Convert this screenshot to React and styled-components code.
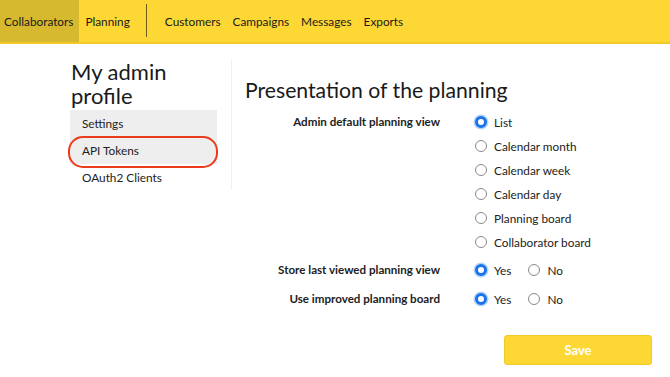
import React, { useState } from 'react'
import styled, { createGlobalStyle } from 'styled-components'

const GlobalStyle = createGlobalStyle`
    body {
        margin: 0;
        background: #fff;
        font-family: Lato, "Open Sans", sans-serif;
        color: #222;
    }
`

const Container = styled.div`
    width: 670px;
    height: 377px;
    overflow: hidden;
`
const Header = styled.div`
    height: 42px;
    display: flex;
    align-items: stretch;
    background: #fdd835;
    border-bottom: 2px solid #f3c928;
`
const NavItem = styled.div`
    display: flex;
    align-items: center;
    padding: 0 ${props => props.active ? '6px 0 4px' : '6px'};
    font-size: 11.8px;
    color: #1a1a1a;
    background: ${props => props.active ? '#d7b92f' : 'transparent'};
`
const NavSeparator = styled.div`
    width: 1px;
    margin: 4px 12px 5px 10px;
    background: #6b5c1c;
`
const Wrapper = styled.div`
    display: flex;
    padding: 16px 18px 0 70px;
`
const Sidebar = styled.div`
    width: 147px;
    position: relative;
`
const SideTitle = styled.div`
    font-size: 22px;
    line-height: 24px;
    padding: 0 0 2px 1px;
    color: #1a1a1a;
`
const SideItem = styled.div`
    height: 27px;
    display: flex;
    align-items: center;
    padding-left: 12px;
    font-size: 11.8px;
    background: ${props => props.grey ? '#eeeeee' : 'transparent'};
`
const Highlight = styled.div`
    position: absolute;
    left: -2px;
    top: 76px;
    width: 146px;
    height: 28px;
    border: 2px solid #ec3a1c;
    border-radius: 15px;
`
const Divider = styled.div`
    width: 1px;
    height: 130px;
    margin: 0 13px 0 14px;
    background: #f0f0f0;
    flex-shrink: 0;
`
const Main = styled.div`
    flex: 1;
`
const Title = styled.div`
    font-size: 21.2px;
    line-height: 26px;
    margin-top: 17px;
    color: #1a1a1a;
`
const Form = styled.div`
    margin-top: 7px;
`
const Row = styled.div`
    display: flex;
    align-items: flex-start;
    margin-bottom: ${props => props.gap || 5}px;
`
const Label = styled.div`
    width: 195px;
    text-align: right;
    font-weight: 700;
    font-size: 11.6px;
    line-height: 24px;
    padding-right: 35px;
    flex-shrink: 0;
`
const Options = styled.div`
    display: flex;
    flex-direction: ${props => props.inline ? 'row' : 'column'};
    gap: ${props => props.inline ? '17px' : '0'};
`
const Option = styled.label`
    display: flex;
    align-items: center;
    height: 24px;
    font-size: 11.8px;
    color: #222;
    cursor: pointer;
`
const Dot = styled.span`
    width: 12px;
    height: 12px;
    border-radius: 50%;
    box-sizing: border-box;
    margin-right: 7px;
    border: ${props => props.on ? '3.5px solid #1a73e8' : '1px solid #8a8a8a'};
    background: #fff;
    box-shadow: ${props => props.on ? '0 0 0 1.5px #b9d3f7' : 'none'};
`
const Actions = styled.div`
    display: flex;
    justify-content: flex-end;
    margin-top: 24px;
`
const Button = styled.button`
    width: 148px;
    height: 30px;
    border: 1px solid #f1cb2a;
    border-radius: 3px;
    background: #fdd835;
    color: #fff;
    font-family: Lato, sans-serif;
    font-size: 13px;
    font-weight: 700;
    cursor: pointer;
`

function Radio({ on, label, onClick }) {
    return (
        <Option onClick={onClick}>
            <Dot on={on ? 1 : 0} />
            {label}
        </Option>
    )
}

const views = ['List', 'Calendar month', 'Calendar week', 'Calendar day', 'Planning board', 'Collaborator board']

function App() {
    const [view, setView] = useState('List')
    const [store, setStore] = useState(true)
    const [improved, setImproved] = useState(true)

    return (
        <Container>
            <GlobalStyle />
            <Header>
                <NavItem active>Collaborators</NavItem>
                <NavItem>Planning</NavItem>
                <NavSeparator />
                <NavItem>Customers</NavItem>
                <NavItem>Campaigns</NavItem>
                <NavItem>Messages</NavItem>
                <NavItem>Exports</NavItem>
            </Header>
            <Wrapper>
                <Sidebar>
                    <SideTitle>My admin profile</SideTitle>
                    <SideItem grey>Settings</SideItem>
                    <SideItem grey>API Tokens</SideItem>
                    <SideItem>OAuth2 Clients</SideItem>
                    <Highlight />
                </Sidebar>
                <Divider />
                <Main>
                    <Title>Presentation of the planning</Title>
                    <Form>
                        <Row gap={4}>
                            <Label>Admin default planning view</Label>
                            <Options>
                                {views.map(v => (
                                    <Radio key={v} label={v} on={view === v} onClick={() => setView(v)} />
                                ))}
                            </Options>
                        </Row>
                        <Row gap={5}>
                            <Label>Store last viewed planning view</Label>
                            <Options inline>
                                <Radio label="Yes" on={store} onClick={() => setStore(true)} />
                                <Radio label="No" on={!store} onClick={() => setStore(false)} />
                            </Options>
                        </Row>
                        <Row>
                            <Label>Use improved planning board</Label>
                            <Options inline>
                                <Radio label="Yes" on={improved} onClick={() => setImproved(true)} />
                                <Radio label="No" on={!improved} onClick={() => setImproved(false)} />
                            </Options>
                        </Row>
                    </Form>
                    <Actions>
                        <Button>Save</Button>
                    </Actions>
                </Main>
            </Wrapper>
        </Container>
    )
}

export default App
